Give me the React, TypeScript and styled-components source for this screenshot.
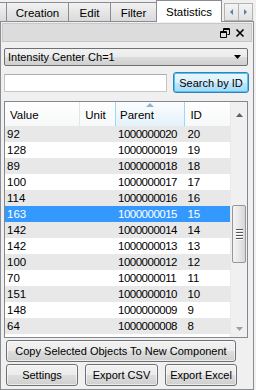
import React from 'react';
import styled, { createGlobalStyle } from 'styled-components';

const Global = createGlobalStyle`
  html, body {
    margin: 0;
    padding: 0;
    background: #f0f0f0;
  }
  * {
    box-sizing: border-box;
  }
`;

const Window = styled.div`
  width: 256px;
  height: 390px;
  overflow: hidden;
  background: #f0f0f0;
  font-family: "Liberation Sans", Arial, sans-serif;
  font-size: 11px;
  color: #000;
  display: flex;
  flex-direction: column;
`;

const TabBar = styled.div`
  height: 22px;
  flex: none;
  display: flex;
  align-items: flex-end;
`;

const Tab = styled.div<{ $active?: boolean; $w: number }>`
  width: ${p => p.$w}px;
  height: ${p => (p.$active ? 22 : 20)}px;
  display: flex;
  align-items: center;
  justify-content: center;
  font-size: 11.5px;
  border: 1px solid #898c95;
  border-bottom: ${p => (p.$active ? 'none' : '1px solid #898c95')};
  margin-right: ${p => (p.$active ? 0 : -1)}px;
  background: ${p => (p.$active ? '#fff' : 'linear-gradient(#f2f2f2, #dadada)')};
  position: relative;
  z-index: ${p => (p.$active ? 1 : 0)};
  padding-top: ${p => (p.$active ? 0 : 1)}px;
`;

const Scroller = styled.div`
  display: flex;
  margin-left: 2px;
  margin-bottom: 1px;
`;

const ScrollBtn = styled.div`
  width: 15px;
  height: 18px;
  border: 1px solid #b3b3b3;
  background: linear-gradient(#f4f4f4, #e2e2e2);
  display: flex;
  align-items: center;
  justify-content: center;
  margin-right: -1px;
`;

const Panel = styled.div`
  flex: 1;
  width: 254px;
  border: 1px solid #898c95;
  display: flex;
  flex-direction: column;
  margin-top: -1px;
`;

const TitleBar = styled.div`
  height: 19px;
  flex: none;
  background: #dcdcdc;
  margin: 1px 1px 0;
  border: 1px solid #c8c8c8;
  display: flex;
  align-items: center;
  justify-content: flex-end;
  gap: 5px;
  padding-right: 6px;
`;

const Body = styled.div`
  flex: 1;
  display: flex;
  flex-direction: column;
  padding: 6px 3px 0 3px;
`;

const Combo = styled.div`
  height: 18px;
  flex: none;
  border: 1px solid #707070;
  border-radius: 2px;
  background: linear-gradient(#f2f2f2 0%, #ebebeb 50%, #dddddd 51%, #cfcfcf 100%);
  display: flex;
  align-items: center;
  padding: 0 6px 0 3px;
  margin-right: 2px;
`;

const ComboText = styled.span`
  flex: 1;
`;

const SearchRow = styled.div`
  display: flex;
  align-items: center;
  margin-top: 6px;
  gap: 6px;
`;

const SearchInput = styled.div`
  width: 163px;
  height: 18px;
  border: 1px solid #c5c5c5;
  border-top-color: #abadb3;
  background: #fff;
`;

const Button = styled.div<{ $w: number; $focus?: boolean }>`
  width: ${p => p.$w}px;
  height: ${p => (p.$focus ? 21 : 22)}px;
  flex: none;
  border: 1px solid ${p => (p.$focus ? '#3c7fb1' : '#707070')};
  border-radius: 3px;
  background: ${p =>
    p.$focus
      ? 'linear-gradient(#eaf6fd 0%, #d9f0fc 50%, #bee6fd 51%, #a7d9f5 100%)'
      : 'linear-gradient(#f2f2f2 0%, #ebebeb 50%, #dddddd 51%, #cfcfcf 100%)'};
  box-shadow: inset 0 0 0 1px ${p => (p.$focus ? '#48c6f7' : 'rgba(255,255,255,0.6)')};
  display: flex;
  align-items: center;
  justify-content: center;
  white-space: nowrap;
`;

const Table = styled.div`
  margin-top: 8px;
  height: 237px;
  flex: none;
  border: 1px solid #828790;
  background: #fff;
  display: flex;
  margin-right: 2px;
`;

const Grid = styled.div`
  flex: 1;
  overflow: hidden;
  display: flex;
  flex-direction: column;
`;

const HeaderRow = styled.div`
  height: 24px;
  flex: none;
  display: flex;
  background: #fff;
  font-size: 11.5px;
`;

const HeaderCell = styled.div<{ $w: number; $sorted?: boolean }>`
  width: ${p => p.$w}px;
  display: flex;
  align-items: center;
  padding-left: ${p => (p.$sorted ? 4 : 5)}px;
  position: relative;
  border-right: 1px solid ${p => (p.$sorted ? '#96d9f9' : '#e5e5e5')};
  border-left: ${p => (p.$sorted ? '1px solid #96d9f9' : 'none')};
  margin-left: ${p => (p.$sorted ? -1 : 0)}px;
  background: ${p => (p.$sorted ? 'linear-gradient(#fcfdfe, #e3f2fb)' : 'linear-gradient(#fff, #f7f8f9)')};
  padding-top: 2px;
`;

const SortArrow = styled.svg`
  position: absolute;
  top: 1px;
  left: 50%;
  margin-left: -4px;
`;

const Row = styled.div<{ $alt?: boolean; $sel?: boolean }>`
  height: 16px;
  flex: none;
  display: flex;
  align-items: center;
  font-size: 11.5px;
  background: ${p => (p.$sel ? '#3399ff' : p.$alt ? '#e8e8e8' : '#fff')};
  color: ${p => (p.$sel ? '#fff' : '#000')};
`;

const Cell = styled.div<{ $w: number; $tight?: boolean }>`
  width: ${p => p.$w}px;
  padding-left: 2px;
  white-space: nowrap;
  overflow: hidden;
  letter-spacing: ${p => (p.$tight ? '-0.5px' : '0')};
`;

const VScroll = styled.div`
  width: 17px;
  background: #f0f0f0;
  border-left: 1px solid #e9e9e9;
  display: flex;
  flex-direction: column;
  align-items: center;
`;

const ArrowBox = styled.div`
  height: 17px;
  width: 17px;
  display: flex;
  align-items: center;
  justify-content: center;
`;

const Track = styled.div`
  flex: 1;
  width: 100%;
  display: flex;
  flex-direction: column;
  padding-top: 82px;
`;

const Thumb = styled.div`
  height: 58px;
  margin: 0 1px;
  border: 1px solid #979797;
  border-radius: 2px;
  background: linear-gradient(90deg, #f3f3f3, #e8e8e8 50%, #d6d6d6);
  display: flex;
  flex-direction: column;
  align-items: center;
  justify-content: center;
  gap: 1px;
`;

const Grip = styled.div`
  width: 7px;
  height: 1px;
  background: #555;
  box-shadow: 0 1px 0 #fff;
  margin-bottom: 1px;
`;

const ButtonArea = styled.div`
  display: flex;
  flex-direction: column;
  gap: 2px;
  padding: 2px 0 0 2px;
`;

const ButtonRow = styled.div`
  display: flex;
  gap: 7px;
`;

const cols = [76, 36, 70, 45];

const rows: [number, string, number][] = [
  [92, '1000000020', 20],
  [128, '1000000019', 19],
  [89, '1000000018', 18],
  [100, '1000000017', 17],
  [114, '1000000016', 16],
  [163, '1000000015', 15],
  [142, '1000000014', 14],
  [142, '1000000013', 13],
  [100, '1000000012', 12],
  [70, '1000000011', 11],
  [151, '1000000010', 10],
  [148, '1000000009', 9],
  [64, '1000000008', 8],
];

export default function App() {
  return (
    <Window>
      <Global />
      <TabBar>
        <Tab $w={7} style={{ borderLeft: 'none' }} />
        <Tab $w={63}>Creation</Tab>
        <Tab $w={43}>Edit</Tab>
        <Tab $w={47}>Filter</Tab>
        <Tab $active $w={66}>Statistics</Tab>
        <Scroller>
          <ScrollBtn>
            <svg width="4" height="6"><path d="M3 0 L0 3 L3 6 Z" fill="#5a7fa6" /></svg>
          </ScrollBtn>
          <ScrollBtn>
            <svg width="4" height="6"><path d="M0 0 L3 3 L0 6 Z" fill="#5a7fa6" /></svg>
          </ScrollBtn>
        </Scroller>
      </TabBar>
      <Panel>
        <TitleBar>
          <svg width="10" height="10" viewBox="0 0 10 10">
            <path d="M3.5 0.5h6v6h-2M3.5 0.5v2.5M0.5 3.5h6v6h-6z" fill="none" stroke="#000" strokeWidth="1" />
            <path d="M3.5 1.5h6M0.5 4.5h6" stroke="#000" strokeWidth="1" />
          </svg>
          <svg width="10" height="10" viewBox="0 0 10 10">
            <path d="M1.5 1.5L8.5 8.5M8.5 1.5L1.5 8.5" stroke="#000" strokeWidth="1.6" />
          </svg>
        </TitleBar>
        <Body>
          <Combo>
            <ComboText>Intensity Center Ch=1</ComboText>
            <svg width="7" height="4"><path d="M0 0 H7 L3.5 4 Z" fill="#000" /></svg>
          </Combo>
          <SearchRow>
            <SearchInput />
            <Button $w={76} $focus>Search by ID</Button>
          </SearchRow>
          <Table>
            <Grid>
              <HeaderRow>
                <HeaderCell $w={cols[0]}>Value</HeaderCell>
                <HeaderCell $w={cols[1]}>Unit</HeaderCell>
                <HeaderCell $w={cols[2] + 1} $sorted>
                  <SortArrow width="8" height="4"><path d="M0 4 L4 0 L8 4 Z" fill="#8eb6cf" /></SortArrow>
                  Parent
                </HeaderCell>
                <HeaderCell $w={cols[3]} style={{ borderRight: 'none' }}>ID</HeaderCell>
              </HeaderRow>
              {rows.map((r, i) => (
                <Row key={r[2]} $alt={i % 2 === 0} $sel={r[2] === 15}>
                  <Cell $w={cols[0]}>{r[0]}</Cell>
                  <Cell $w={cols[1]} />
                  <Cell $w={cols[2]} $tight>{r[1]}</Cell>
                  <Cell $w={cols[3]}>{r[2]}</Cell>
                </Row>
              ))}
            </Grid>
            <VScroll>
              <ArrowBox style={{ marginTop: 4 }}>
                <svg width="7" height="4"><path d="M0 4 L3.5 0 L7 4 Z" fill="#606060" /></svg>
              </ArrowBox>
              <Track>
                <Thumb>
                  <Grip />
                  <Grip />
                  <Grip />
                  <Grip />
                </Thumb>
              </Track>
              <ArrowBox>
                <svg width="7" height="4"><path d="M0 0 H7 L3.5 4 Z" fill="#a0a0a0" /></svg>
              </ArrowBox>
            </VScroll>
          </Table>
          <ButtonArea>
            <Button $w={230}>Copy Selected Objects To New Component</Button>
            <ButtonRow>
              <Button $w={72}>Settings</Button>
              <Button $w={73}>Export CSV</Button>
              <Button $w={72}>Export Excel</Button>
            </ButtonRow>
          </ButtonArea>
        </Body>
      </Panel>
    </Window>
  );
}
